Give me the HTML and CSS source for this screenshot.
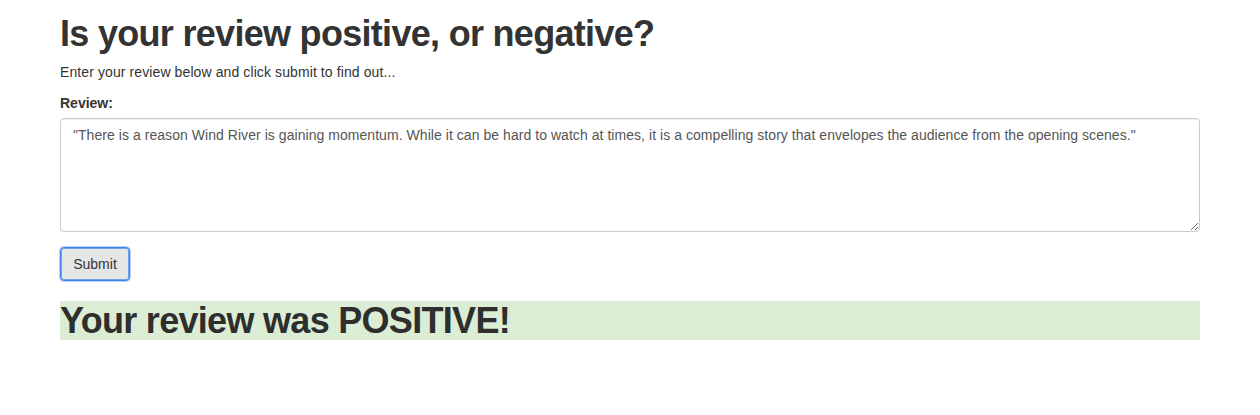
FILE: index.html
```html
<!DOCTYPE html>
<html lang="en">
<head>
<meta charset="utf-8">
<title>Sentiment</title>
<link rel="stylesheet" href="styles.css">
</head>
<body>
<div class="container">
  <h1 class="title">Is your review positive, or negative?</h1>
  <p class="lead-text">Enter your review below and click submit to find out...</p>
  <form class="review-form">
    <div class="form-group">
      <label class="field-label" for="review">Review:</label>
      <textarea id="review" class="field-input" rows="5">"There is a reason Wind River is gaining momentum. While it can be hard to watch at times, it is a compelling story that envelopes the audience from the opening scenes."</textarea>
    </div>
    <button type="button" class="btn-submit">Submit</button>
  </form>
  <h1 class="result">Your review was POSITIVE!</h1>
</div>
</body>
</html>
```

FILE: styles.css
```css
* { box-sizing: border-box; }
html, body { margin: 0; padding: 0; background: #fff; }
body {
  font-family: "Liberation Sans", Arial, "Helvetica Neue", sans-serif;
  font-size: 14px;
  line-height: 20px;
  color: #333;
}
.container {
  width: 1140px;
  margin: 0 auto;
  padding-top: 14px;
}
.title,
.result {
  font-family: "Liberation Sans", Arial, sans-serif;
  font-size: 36px;
  font-weight: 700;
  line-height: 39.6px;
  letter-spacing: -0.7px;
}
.title {
  margin: 0 0 8px;
  color: #333;
}
.lead-text {
  margin: 0 0 11px;
  font-size: 14px;
  line-height: 20px;
  letter-spacing: 0.1px;
}
.review-form { margin: 0; }
.form-group {
  display: flex;
  flex-direction: column;
  margin-bottom: 15px;
}
.field-label {
  font-weight: 700;
  margin-bottom: 5px;
  line-height: 20px;
}
.field-input {
  display: block;
  width: 100%;
  height: 114px;
  padding: 6px 12px;
  font-family: inherit;
  font-size: 14px;
  line-height: 20px;
  letter-spacing: 0.05px;
  color: #555;
  background: #fff;
  border: 1px solid #ccc;
  border-radius: 4px;
  box-shadow: inset 0 1px 1px rgba(0,0,0,.075);
  resize: vertical;
  margin: 0;
}
.btn-submit {
  display: block;
  width: 70px;
  height: 34px;
  padding: 6px 12px;
  margin: 0;
  font-family: inherit;
  font-size: 14px;
  line-height: 20px;
  color: #333;
  background: #e6e6e6;
  border: 1px solid #3f80ea;
  border-radius: 4px;
  box-shadow: inset 0 0 0 1px #6ea2f3, 0 0 1px 1px rgba(90,150,245,.45);
  cursor: pointer;
}
.result {
  margin: 20px 0 10px;
  color: #2e2e2e;
  background: #dbeed5;
}
```
